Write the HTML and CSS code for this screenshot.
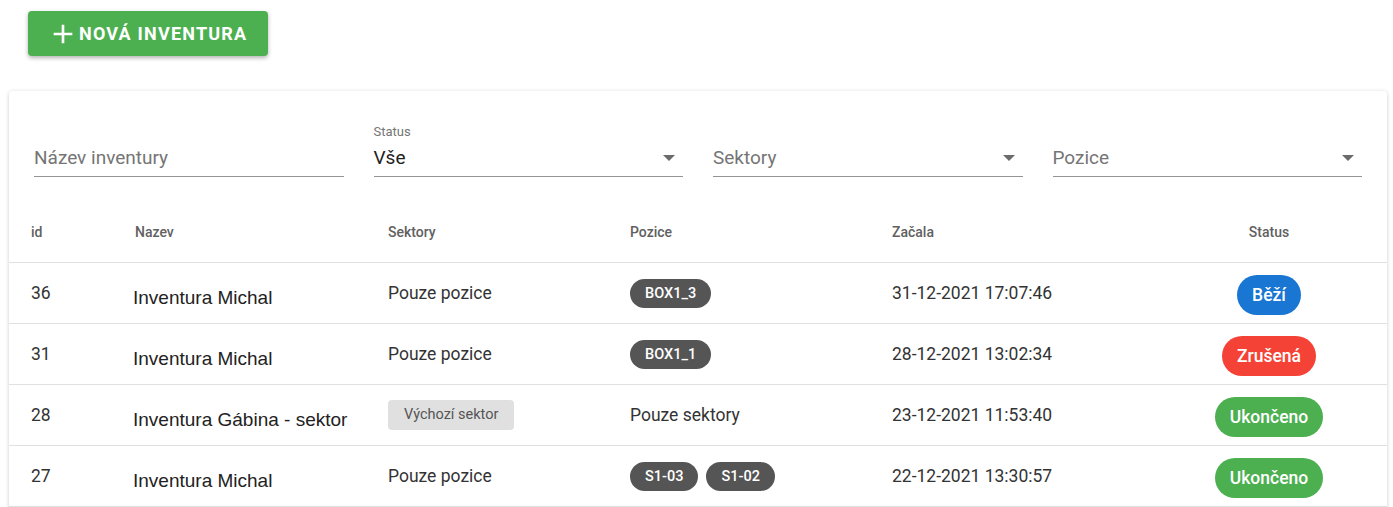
FILE: index.html
```html
<!DOCTYPE html>
<html lang="cs">
<head>
    <meta charset="UTF-8">
    <meta name="viewport" content="width=device-width, initial-scale=1.0">
    <title>Inventury</title>
    <link rel="stylesheet" href="styles.css">
</head>
<body>
    <div class="toolbar">
        <button class="add-btn">
            <svg class="add-icon" viewBox="0 0 24 24" width="32" height="32"><path d="M19 13h-6v6h-2v-6H5v-2h6V5h2v6h6v2z" fill="#fff"/></svg>
            Nová inventura
        </button>
    </div>

    <div class="card">
        <div class="filters">
            <div class="field">
                <div class="field-label"></div>
                <div class="field-input placeholder">Název inventury</div>
            </div>
            <div class="field select">
                <div class="field-label">Status</div>
                <div class="field-input">Vše</div>
            </div>
            <div class="field select">
                <div class="field-label"></div>
                <div class="field-input placeholder">Sektory</div>
            </div>
            <div class="field select">
                <div class="field-label"></div>
                <div class="field-input placeholder">Pozice</div>
            </div>
        </div>

        <table class="grid">
            <colgroup>
                <col style="width: 104px">
                <col style="width: 253px">
                <col style="width: 242px">
                <col style="width: 262px">
                <col style="width: 281px">
                <col style="width: 236px">
            </colgroup>
            <thead>
                <tr>
                    <th>id</th>
                    <th>Nazev</th>
                    <th>Sektory</th>
                    <th>Pozice</th>
                    <th>Začala</th>
                    <th class="center">Status</th>
                </tr>
            </thead>
            <tbody>
                <tr>
                    <td>36</td>
                    <td><span class="name">Inventura Michal</span></td>
                    <td>Pouze pozice</td>
                    <td><span class="chip">BOX1_3</span></td>
                    <td>31-12-2021 17:07:46</td>
                    <td class="center"><span class="status running">Běží</span></td>
                </tr>
                <tr>
                    <td>31</td>
                    <td><span class="name">Inventura Michal</span></td>
                    <td>Pouze pozice</td>
                    <td><span class="chip">BOX1_1</span></td>
                    <td>28-12-2021 13:02:34</td>
                    <td class="center"><span class="status cancelled">Zrušená</span></td>
                </tr>
                <tr>
                    <td>28</td>
                    <td><span class="name">Inventura Gábina - sektor</span></td>
                    <td><span class="sector">Výchozí sektor</span></td>
                    <td>Pouze sektory</td>
                    <td>23-12-2021 11:53:40</td>
                    <td class="center"><span class="status done">Ukončeno</span></td>
                </tr>
                <tr>
                    <td>27</td>
                    <td><span class="name">Inventura Michal</span></td>
                    <td>Pouze pozice</td>
                    <td><span class="chip">S1-03</span><span class="chip">S1-02</span></td>
                    <td>22-12-2021 13:30:57</td>
                    <td class="center"><span class="status done">Ukončeno</span></td>
                </tr>
            </tbody>
        </table>
    </div>
</body>
</html>
```

FILE: styles.css
```css
body {
    margin: 0;
    height: 507px;
    background: #fff;
    font-family: Roboto, 'Noto Sans', sans-serif;
    color: #333;
    overflow: hidden;
}

.toolbar {
    padding: 11px 0 0 28px;
    height: 80px;
}

.add-btn {
    display: flex;
    align-items: center;
    gap: 0;
    height: 45px;
    width: 240px;
    padding: 0 0 0 19px;
    border: none;
    border-radius: 4px;
    background: #4caf50;
    color: #fff;
    font-family: Roboto, sans-serif;
    font-size: 18px;
    font-weight: 700;
    letter-spacing: 1.2px;
    text-transform: uppercase;
    box-shadow: 0 2px 4px rgba(0, 0, 0, 0.3);
    cursor: pointer;
}

.add-icon {
    margin-top: 1px;
}

.card {
    margin-left: 9px;
    width: 1378px;
    height: 420px;
    background: #fff;
    border-radius: 4px;
    box-shadow: 0 1px 4px rgba(0, 0, 0, 0.2);
    padding-top: 34px;
    overflow: hidden;
}

.filters {
    display: grid;
    grid-template-columns: repeat(4, 1fr);
    gap: 30px;
    padding: 0 25px;
}

.field {
    position: relative;
}

.field-label {
    height: 16px;
    font-size: 13px;
    line-height: 14px;
    color: #757575;
}

.field-input {
    height: 36px;
    line-height: 34px;
    font-size: 19px;
    color: #222;
    border-bottom: 1px solid #949494;
    box-sizing: border-box;
}

.field-input.placeholder {
    color: #757575;
}

.select .field-input::after {
    content: "";
    position: absolute;
    right: 8px;
    bottom: 16px;
    border-left: 6px solid transparent;
    border-right: 6px solid transparent;
    border-top: 6px solid #6b6b6b;
}

.grid {
    margin-top: 25px;
    width: 100%;
    border-collapse: collapse;
    table-layout: fixed;
}

.grid th {
    height: 60px;
    padding: 0 0 0 22px;
    text-align: left;
    font-size: 14px;
    font-weight: 500;
    color: #616161;
    border-bottom: 1px solid #e0e0e0;
}

.grid td {
    height: 60px;
    padding: 0 0 0 22px;
    font-size: 17.5px;
    color: #333;
    border-bottom: 1px solid #e0e0e0;
    white-space: nowrap;
}

.grid .center {
    text-align: center;
    padding-left: 0;
}

.name {
    display: inline-block;
    padding-top: 10px;
    margin-left: -2px;
    font-family: 'Liberation Sans', Arial, sans-serif;
    font-size: 19px;
    color: #222;
}

.chip {
    display: inline-block;
    height: 29px;
    line-height: 29px;
    padding: 0 15px;
    margin-right: 8px;
    border-radius: 15px;
    background: #555;
    color: #fff;
    font-size: 14.5px;
    font-weight: 500;
}

.sector {
    display: inline-block;
    height: 30px;
    line-height: 30px;
    padding: 0 16px;
    border-radius: 4px;
    background: #e0e0e0;
    color: #555;
    font-size: 14.5px;
}

.status {
    display: inline-block;
    height: 40px;
    line-height: 40px;
    margin-top: 4px;
    padding: 0 15px;
    border-radius: 20px;
    color: #fff;
    font-size: 17.5px;
    font-weight: 500;
}

.running {
    background: #1976d2;
}

.cancelled {
    background: #f44336;
}

.done {
    background: #4caf50;
}
```
